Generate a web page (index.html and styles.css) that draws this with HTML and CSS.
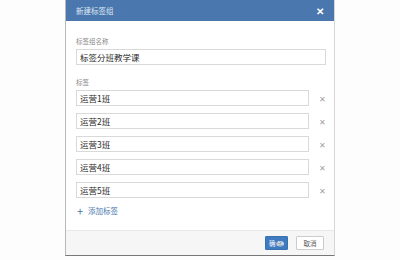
FILE: index.html
```html
<!DOCTYPE html>
<html lang="zh-CN">
<head>
    <meta charset="UTF-8">
    <title>新建标签组</title>
    <link rel="stylesheet" href="styles.css">
</head>
<body>
    <div class="page">
        <div class="modal">
            <div class="modal-header">
                <span class="modal-title">新建标签组</span>
                <span class="modal-close">&#x2715;</span>
            </div>
            <div class="modal-body">
                <div class="field-label">标签组名称</div>
                <div class="text-input wide">标签分班教学课</div>

                <div class="field-label tags-label">标签</div>
                <div class="tag-row">
                    <div class="text-input">运营1班</div>
                    <span class="remove">&#x2715;</span>
                </div>
                <div class="tag-row">
                    <div class="text-input">运营2班</div>
                    <span class="remove">&#x2715;</span>
                </div>
                <div class="tag-row">
                    <div class="text-input">运营3班</div>
                    <span class="remove">&#x2715;</span>
                </div>
                <div class="tag-row">
                    <div class="text-input">运营4班</div>
                    <span class="remove">&#x2715;</span>
                </div>
                <div class="tag-row">
                    <div class="text-input">运营5班</div>
                    <span class="remove">&#x2715;</span>
                </div>

                <div class="add-tag"><span class="plus">+</span>添加标签</div>
            </div>
            <div class="modal-footer">
                <button class="btn btn-primary">确
                    <!-- cursor overlay seen in the screenshot -->
                    <svg class="cursor" width="12" height="10" viewBox="0 0 12 10">
                        <ellipse cx="6" cy="6" rx="5.5" ry="3.8" fill="#c9d3e0"/>
                        <path d="M3 1 L3 6 L4.5 5 L5.5 7 L6.3 6.6 L5.4 4.7 L7 4.5 Z" fill="#fff" stroke="#4a6a95" stroke-width="0.6"/>
                        <text x="4" y="9.2" font-size="3.5" fill="#4a6a95" font-family="Liberation Sans">GO</text>
                    </svg>
                </button>
                <button class="btn btn-default">取消</button>
            </div>
        </div>
    </div>
</body>
</html>
```

FILE: styles.css
```css
body {
    margin: 0;
    padding: 0;
    background-color: #fdfdfd;
    font-family: "Noto Sans CJK SC", "Liberation Sans", sans-serif;
}

.page {
    display: flex;
    justify-content: center;
    height: 260px;
}

.modal {
    width: 270px;
    height: 256px;
    background-color: #fff;
    border-left: 1px solid #b9b9b9;
    border-right: 1px solid #d6d6d6;
    border-bottom: 1px solid #777;
    display: flex;
    flex-direction: column;
    box-sizing: border-box;
}

.modal-header {
    height: 21px;
    background-color: #4a77ae;
    display: flex;
    align-items: center;
    justify-content: space-between;
    padding: 0 10px 0 10px;
}

.modal-title {
    color: #dfe7f2;
    font-size: 7.5px;
}

.modal-close {
    color: #fff;
    font-size: 9.5px;
    font-weight: bold;
}

.modal-body {
    flex: 1;
    padding: 16px 9px 0 10px;
}

.field-label {
    color: #8a8a8a;
    font-size: 6.5px;
    line-height: 8px;
    margin-bottom: 4px;
}

.tags-label {
    margin-top: 13px;
}

.text-input {
    height: 16px;
    border: 1px solid #d9d9d9;
    box-sizing: border-box;
    padding-left: 3px;
    font-size: 8.5px;
    line-height: 14px;
    color: #2b2b2b;
    flex: 1;
}

.text-input.wide {
    width: 250px;
}

.tag-row {
    display: flex;
    align-items: center;
    margin-bottom: 7px;
    width: 250px;
}

.remove {
    width: 17px;
    text-align: right;
    color: #a0a0a0;
    font-size: 7.5px;
}

.add-tag {
    color: #4a77ae;
    font-size: 7.5px;
    margin-top: 7px;
    display: flex;
    align-items: center;
}

.plus {
    font-size: 11px;
    margin-right: 5px;
    margin-left: 1px;
    line-height: 10px;
}

.modal-footer {
    height: 24px;
    background-color: #f6f6f6;
    border-top: 1px solid #e8e8e8;
    display: flex;
    align-items: center;
    justify-content: flex-end;
    padding-right: 10px;
    gap: 8px;
}

.btn {
    height: 14px;
    padding: 0 3px;
    font-size: 6.5px;
    font-family: inherit;
    border-radius: 1px;
    display: flex;
    align-items: center;
}

.btn-primary {
    background-color: #3e7bc1;
    color: #fff;
    border: 1px solid #3870b0;
    width: 23px;
}

.cursor {
    margin-left: 0;
}

.btn-default {
    background-color: #fff;
    color: #555;
    border: 1px solid #ccc;
    width: 28px;
    justify-content: center;
}
```
